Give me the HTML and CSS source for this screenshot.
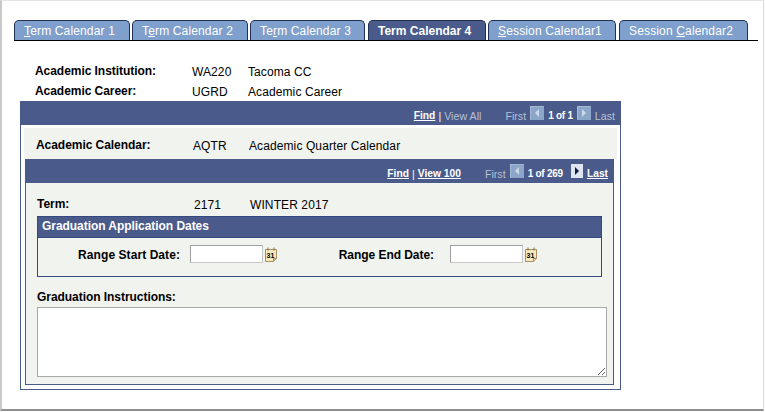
FILE: index.html
```html
<!DOCTYPE html>
<html lang="en">
<head>
    <meta charset="UTF-8">
    <title>Term Calendar 4</title>
    <link rel="stylesheet" href="styles.css">
</head>
<body>
    <div class="frame">
        <div class="tabs">
            <a class="tab tab-1"><u>T</u>erm Calendar 1</a>
            <a class="tab tab-2">T<u>e</u>rm Calendar 2</a>
            <a class="tab tab-3">Te<u>r</u>m Calendar 3</a>
            <a class="tab tab-4 active">Term Calendar 4</a>
            <a class="tab tab-5"><u>S</u>ession Calendar1</a>
            <a class="tab tab-6">Session <u>C</u>alendar2</a>
        </div>

        <div class="info">
            <div class="info-row">
                <span class="label">Academic Institution:</span>
                <span class="code">WA220</span>
                <span>Tacoma CC</span>
            </div>
            <div class="info-row">
                <span class="label">Academic Career:</span>
                <span class="code">UGRD</span>
                <span>Academic Career</span>
            </div>
        </div>

        <div class="box outer">
            <div class="nav">
                <a class="link">Find</a><span class="sep">|</span><span class="off">View All</span>
                <span class="off first">First</span>
                <svg class="arrow" viewBox="0 0 14 14"><rect width="14" height="14" fill="#8ba6c9"/><path d="M0 0h14l-1 1H1v12l-1 1z" fill="#a3b9d6"/><path d="M9 3v8L5 7z" fill="#cbd8e8"/></svg>
                <b class="count">1 of 1</b>
                <svg class="arrow" viewBox="0 0 14 14"><rect width="14" height="14" fill="#8ba6c9"/><path d="M0 0h14l-1 1H1v12l-1 1z" fill="#a3b9d6"/><path d="M5 3v8l4-4z" fill="#cbd8e8"/></svg>
                <span class="off last">Last</span>
            </div>
            <div class="calendar-row">
                <span class="label">Academic Calendar:</span>
                <span class="code">AQTR</span>
                <span>Academic Quarter Calendar</span>
            </div>

            <div class="box inner">
                <div class="nav">
                    <a class="link">Find</a><span class="sep">|</span><a class="link">View 100</a>
                    <span class="off first">First</span>
                    <svg class="arrow" viewBox="0 0 14 14"><rect width="14" height="14" fill="#8ba6c9"/><path d="M0 0h14l-1 1H1v12l-1 1z" fill="#a3b9d6"/><path d="M9 3v8L5 7z" fill="#cbd8e8"/></svg>
                    <b class="count">1 of 269</b>
                    <svg class="arrow next" viewBox="0 0 12 14"><rect width="12" height="14" fill="#dfe6f1"/><path d="M4 3v8l4-4z" fill="#141d40"/></svg>
                    <a class="link last">Last</a>
                </div>
                <div class="term-row">
                    <span class="label">Term:</span>
                    <span class="code">2171</span>
                    <span>WINTER 2017</span>
                </div>
                <div class="group">
                    <div class="group-title">Graduation Application Dates</div>
                    <div class="group-body">
                        <label class="label date-label start">Range Start Date:</label>
                        <input class="date-input" type="text">
                        <svg class="cal" viewBox="0 0 12 15"><path d="M.5 2.5h11v9l-3 3h-8z" fill="#f7e9bf" stroke="#a98f5c"/><path d="M8.5 14.5v-3h3" fill="#d8c595" stroke="#a98f5c"/><path d="M3 .5v3M9 .5v3" stroke="#7d6a44"/><text class="cal-day" x="5.5" y="10.5">31</text></svg>
                        <label class="label date-label end">Range End Date:</label>
                        <input class="date-input" type="text">
                        <svg class="cal" viewBox="0 0 12 15"><path d="M.5 2.5h11v9l-3 3h-8z" fill="#f7e9bf" stroke="#a98f5c"/><path d="M8.5 14.5v-3h3" fill="#d8c595" stroke="#a98f5c"/><path d="M3 .5v3M9 .5v3" stroke="#7d6a44"/><text class="cal-day" x="5.5" y="10.5">31</text></svg>
                    </div>
                </div>
                <div class="label instructions-label">Graduation Instructions:</div>
                <textarea class="instructions"></textarea>
            </div>
        </div>
    </div>
</body>
</html>
```

FILE: styles.css
```css
html, body {
    margin: 0;
    padding: 0;
    background-color: #fff;
}

body {
    font-family: "Liberation Sans", Arial, sans-serif;
    font-size: 12px;
    letter-spacing: 0.1px;
    color: #000;
    height: 412px;
    overflow: hidden;
}

.frame {
    box-sizing: border-box;
    width: 764px;
    height: 411px;
    padding: 19px 0 0 12px;
    border-left: 2px solid #c8c8c8;
    border-top: 1px solid #e4e4e4;
    border-right: 1px solid #d8d8d8;
    border-bottom: 2px solid #8e8e8e;
}

.tabs {
    display: flex;
    width: 744px;
    height: 21px;
    box-sizing: border-box;
    border-bottom: 1px solid #000;
}

.tab {
    box-sizing: border-box;
    height: 20px;
    line-height: 20px;
    padding-left: 9px;
    letter-spacing: 0.15px;
    color: #fff;
    background-color: #7f9fcc;
    border: 1px solid #1f2f55;
    border-bottom: none;
    border-radius: 5px 5px 0 0;
}

.tab-1 { width: 116px; margin-right: 2px; }
.tab-2 { width: 116px; margin-right: 2px; }
.tab-3 { width: 115px; margin-right: 3px; }
.tab-4 { width: 118px; margin-right: 2px; }
.tab-5 { width: 128px; margin-right: 3px; }
.tab-6 { width: 129px; }

.tab.active {
    background-color: #4a5a8a;
    font-weight: bold;
    letter-spacing: 0;
}

.info {
    height: 38px;
    margin: 22px 0 0 21px;
}

.info-row {
    display: flex;
    height: 20px;
    line-height: 19px;
}

.label {
    font-weight: bold;
    letter-spacing: -0.05px;
    position: relative;
    top: -1px;
}

.info-row .label {
    width: 157px;
}

.code {
    width: 56px;
}

.box {
    box-sizing: border-box;
    border: 1px solid #4a5a8a;
}

.outer {
    width: 601px;
    height: 289px;
    margin: 0 0 0 6px;
    padding: 0 3px;
}

.outer > .nav {
    margin: 0 -3px;
    padding-right: 5px;
}

.nav {
    box-sizing: border-box;
    display: flex;
    justify-content: flex-end;
    align-items: center;
    height: 23px;
    padding-top: 4px;
    font-size: 10.7px;
    letter-spacing: 0;
    color: #fff;
    background-color: #4a5a8a;
}

.link {
    color: #fff;
    font-size: 10.25px;
    font-weight: bold;
    text-decoration: underline;
}

.sep {
    margin: 0 3px;
}

.off {
    color: #b5c0d5;
}

.first {
    margin-left: 24px;
    margin-right: 4px;
}

.last {
    margin-left: 4px;
}

.arrow {
    width: 14px;
    height: 14px;
    position: relative;
    top: -3px;
}

.arrow.next {
    width: 12px;
    margin-left: 4px;
}

.count {
    margin: 0 4px;
    font-size: 10px;
    letter-spacing: -0.25px;
}

.calendar-row {
    display: flex;
    height: 31px;
    line-height: 37px;
    margin-top: 3px;
    padding-left: 12px;
    background-color: #f0f3ee;
}

.calendar-row .label {
    width: 157px;
}

.inner {
    width: 589px;
    height: 226px;
    margin-left: 1px;
    background-color: #f0f3ee;
}

.inner .nav {
    padding-right: 5px;
}

.term-row {
    display: flex;
    height: 33px;
    line-height: 44px;
    padding-left: 11px;
}

.term-row .label {
    width: 157px;
}

.group {
    box-sizing: border-box;
    width: 565px;
    height: 61px;
    margin-left: 11px;
    border: 1px solid #34497f;
}

.group-title {
    height: 20px;
    line-height: 19px;
    padding-left: 4px;
    font-weight: bold;
    letter-spacing: -0.05px;
    color: #fff;
    background-color: #4a5a8a;
    border-bottom: 1px solid #34497f;
}

.group-body {
    box-sizing: border-box;
    display: flex;
    align-items: center;
    height: 39px;
    padding-bottom: 7px;
}

.date-label {
    top: 1px;
    text-align: right;
}

.date-label.start {
    width: 142px;
    margin-right: 10px;
    letter-spacing: 0.07px;
}

.date-label.end {
    width: 157px;
    margin-right: 16px;
}

.date-input {
    box-sizing: border-box;
    width: 73px;
    height: 18px;
    margin: 0;
    padding: 0;
    background-color: #fff;
    border: 1px solid #c8c8c8;
    border-top-color: #a0a0a0;
    border-left-color: #a0a0a0;
}

.cal {
    width: 12px;
    height: 15px;
    margin-left: 2px;
}

.cal-day {
    font-family: "Liberation Sans", Arial, sans-serif;
    font-size: 7px;
    font-weight: bold;
    text-anchor: middle;
    fill: #000;
}

.instructions-label {
    margin: 14px 0 0 11px;
    line-height: 14px;
}

.instructions {
    display: block;
    box-sizing: border-box;
    width: 570px;
    height: 70px;
    margin: 2px 0 0 11px;
    background-color: #fff;
    border: 1px solid #a9a9a9;
}
```
